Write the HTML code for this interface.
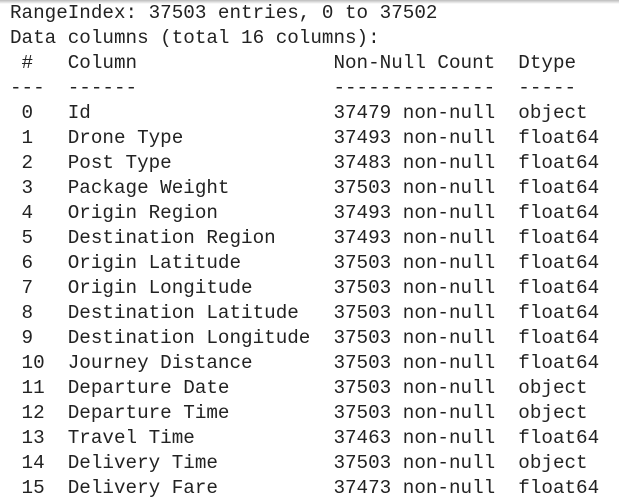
<!DOCTYPE html>
<html><head><meta charset="utf-8"><style>
html,body{margin:0;padding:0;background:#fff;width:619px;height:502px;overflow:hidden}
.top{position:absolute;left:0;top:0;width:619px;height:4px;background:linear-gradient(#bbb,#fff)}
pre{position:absolute;left:10px;top:1px;margin:0;font-family:"Liberation Mono","DejaVu Sans Mono",monospace;font-size:19.25px;line-height:25px;color:#222;white-space:pre}
</style></head><body><div class="top"></div><pre>RangeIndex: 37503 entries, 0 to 37502
Data columns (total 16 columns):
 #   Column                 Non-Null Count  Dtype  
---  ------                 --------------  -----  
 0   Id                     37479 non-null  object 
 1   Drone Type             37493 non-null  float64
 2   Post Type              37483 non-null  float64
 3   Package Weight         37503 non-null  float64
 4   Origin Region          37493 non-null  float64
 5   Destination Region     37493 non-null  float64
 6   Origin Latitude        37503 non-null  float64
 7   Origin Longitude       37503 non-null  float64
 8   Destination Latitude   37503 non-null  float64
 9   Destination Longitude  37503 non-null  float64
 10  Journey Distance       37503 non-null  float64
 11  Departure Date         37503 non-null  object 
 12  Departure Time         37503 non-null  object 
 13  Travel Time            37463 non-null  float64
 14  Delivery Time          37503 non-null  object 
 15  Delivery Fare          37473 non-null  float64</pre></body></html>
